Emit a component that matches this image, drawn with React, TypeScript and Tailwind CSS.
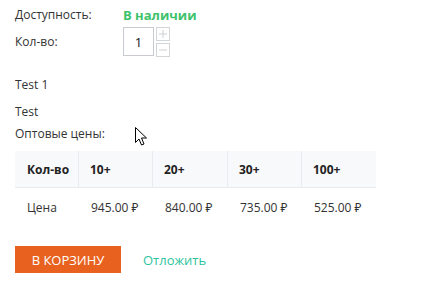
import React from "react";

const prices = [
  { q: "10+", p: "945.00 ₽", w: "w-[74px]" },
  { q: "20+", p: "840.00 ₽", w: "w-[75px]" },
  { q: "30+", p: "735.00 ₽", w: "w-[74px]" },
  { q: "100+", p: "525.00 ₽", w: "w-[74px]" },
];

export default function App() {
  return (
    <div
      className="relative w-[424px] h-[303px] bg-white text-[#333] text-[12px] leading-[18px] pl-[15px] pt-[6px]"
      style={{ fontFamily: '"Open Sans", "Noto Sans", sans-serif' }}
    >
      <div className="flex h-[18px] items-center">
        <div className="w-[108px]">Доступность:</div>
        <div className="font-bold text-[#3cc26b] text-[13px]">В наличии</div>
      </div>
      <div className="flex items-center mt-[3px]">
        <div className="w-[108px]">Кол-во:</div>
        <div className="flex gap-[2px]">
          <div className="w-[31px] h-[29px] border border-[#c8cbcf] flex items-center justify-center text-[13px] text-[#111]">
            1
          </div>
          <div className="flex flex-col gap-[2px]">
            <div className="w-[14px] h-[14px] border border-[#d3d6d9] flex items-center justify-center">
              <svg width="8" height="8" viewBox="0 0 8 8">
                <path d="M0 4H8M4 0V8" stroke="#cdd0d4" strokeWidth="1" />
              </svg>
            </div>
            <div className="w-[14px] h-[14px] border border-[#d3d6d9] flex items-center justify-center">
              <svg width="8" height="8" viewBox="0 0 8 8">
                <path d="M0 4H8" stroke="#cdd0d4" strokeWidth="1" />
              </svg>
            </div>
          </div>
        </div>
      </div>
      <div className="mt-[18px] pt-[1px]">Test 1</div>
      <div className="mt-[8px] pt-[1px]">Test</div>
      <div className="mt-[3px] pt-[1px]">Оптовые цены:</div>
      <div className="mt-[8px] w-[361px]">
        <div className="flex h-[37px] bg-[#f8f9fa] border-b border-[#e9ecef] font-bold text-[#222]">
          <div className="w-[64px] pl-[12px] pt-[2px] flex items-center border-r border-[#e9ecef]">Кол-во</div>
          {prices.map((c, i) => (
            <div
              key={c.q}
              className={`${c.w} pl-[11px] pt-[2px] flex items-center ${i < 3 ? "border-r border-[#e9ecef]" : ""}`}
            >
              {c.q}
            </div>
          ))}
        </div>
        <div className="flex h-[37px]">
          <div className="w-[64px] pl-[12px] pt-[3px] flex items-center">Цена</div>
          {prices.map((c) => (
            <div key={c.p} className={`${c.w} pl-[12px] pt-[3px] flex items-center`}>
              {c.p}
            </div>
          ))}
        </div>
      </div>
      <div className="flex items-center mt-[21px]">
        <button className="w-[106px] h-[27px] bg-[#e8611f] text-white text-[13px] flex items-center justify-center">
          В КОРЗИНУ
        </button>
        <span className="ml-[22px] text-[#2ec4a0] text-[13px]">Отложить</span>
      </div>
      <svg
        className="absolute left-[135px] top-[127px]"
        width="13"
        height="20"
        viewBox="0 0 13 20"
      >
        <path
          d="M0.5 0.5 L0.5 15.5 L4 12 L6.5 18 L9 17 L6.5 11 L11.5 11 Z"
          fill="white"
          stroke="black"
          strokeWidth="1"
        />
      </svg>
    </div>
  );
}
